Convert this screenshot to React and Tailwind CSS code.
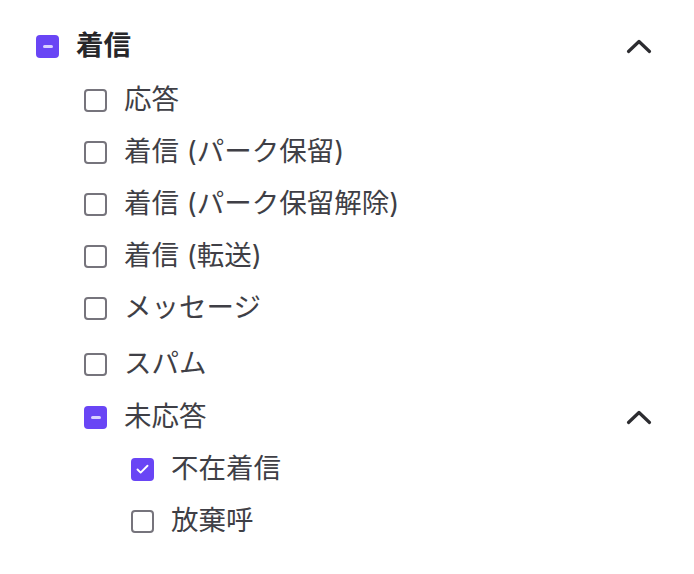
import { Check } from "lucide-react";

const font = { fontFamily: '"Inter", "Noto Sans CJK JP", sans-serif' };

const Box = ({ state }) => {
  if (state === "on") {
    return (
      <span className="flex h-[23px] w-[23px] shrink-0 items-center justify-center rounded-[4px] bg-[#6945f5]">
        <Check size={15} strokeWidth={3} color="#ffffff" />
      </span>
    );
  }
  if (state === "some") {
    return (
      <span className="flex h-[23px] w-[23px] shrink-0 items-center justify-center rounded-[4px] bg-[#6945f5]">
        <span className="h-[3px] w-[10px] rounded-full bg-[#d9d0ff]" />
      </span>
    );
  }
  return <span className="h-[23px] w-[23px] shrink-0 rounded-[4px] border-2 border-[#76747c] bg-white" />;
};

const Chevron = () => (
  <svg width="26" height="16" viewBox="0 0 26 16" fill="none">
    <path d="M2.5 13.5 13 3.5l10.5 10" stroke="#2c2c30" strokeWidth="3.2" strokeLinecap="round" strokeLinejoin="round" />
  </svg>
);

const Row = ({ state, label, bold, chevron, className = "" }) => (
  <div className={`flex h-[52px] items-center ${className}`}>
    <Box state={state} />
    <span
      className={`ml-[17px] text-[27.5px] leading-none ${bold ? "font-bold text-[#27272a]" : "text-[#3f3f46]"}`}
    >
      {label}
    </span>
    {chevron && (
      <span className="ml-auto mr-[42px] flex">
        <Chevron />
      </span>
    )}
  </div>
);

export default function App() {
  return (
    <div className="min-h-screen bg-white pl-[36px] pt-[20px]" style={font}>
      <Row state="some" label="着信" bold chevron />
      <div className="mt-[2px] pl-[48px]">
        <Row state="off" label="応答" />
        <Row state="off" label="着信 (パーク保留)" />
        <Row state="off" label="着信 (パーク保留解除)" />
        <Row state="off" label="着信 (転送)" />
        <Row state="off" label="メッセージ" />
        <Row state="off" label="スパム" className="mt-[4px]" />
        <Row state="some" label="未応答" chevron className="mt-[1px]" />
        <div className="pl-[47px]">
          <Row state="on" label="不在着信" />
          <Row state="off" label="放棄呼" />
        </div>
      </div>
    </div>
  );
}
